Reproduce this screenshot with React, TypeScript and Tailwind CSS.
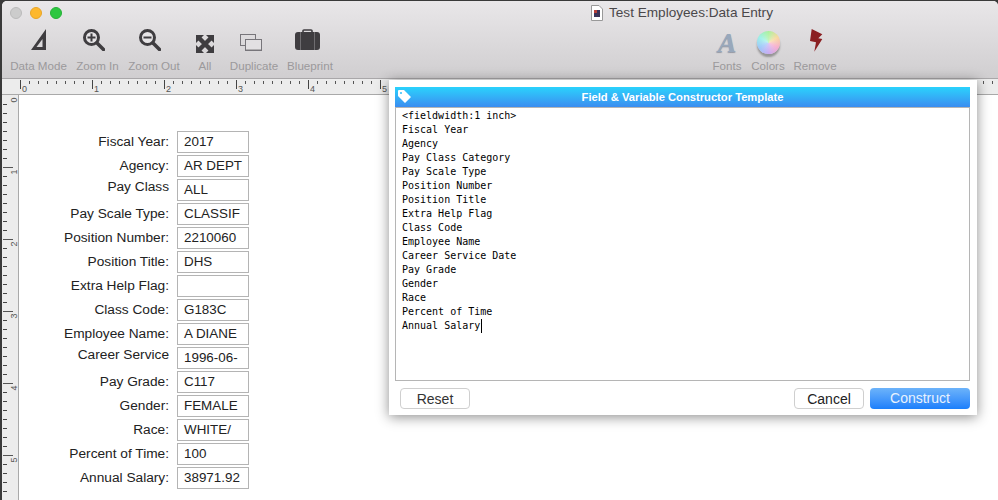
const fields = [
  { label: "Fiscal Year:", value: "2017" },
  { label: "Agency:", value: "AR DEPT" },
  { label: "Pay Class", value: "ALL", raised: true },
  { label: "Pay Scale Type:", value: "CLASSIF" },
  { label: "Position Number:", value: "2210060" },
  { label: "Position Title:", value: "DHS" },
  { label: "Extra Help Flag:", value: "" },
  { label: "Class Code:", value: "G183C" },
  { label: "Employee Name:", value: "A DIANE" },
  { label: "Career Service", value: "1996-06-", raised: true },
  { label: "Pay Grade:", value: "C117" },
  { label: "Gender:", value: "FEMALE" },
  { label: "Race:", value: "WHITE/" },
  { label: "Percent of Time:", value: "100" },
  { label: "Annual Salary:", value: "38971.92" },
];

const templateLines = [
  "<fieldwidth:1 inch>",
  "Fiscal Year",
  "Agency",
  "Pay Class Category",
  "Pay Scale Type",
  "Position Number",
  "Position Title",
  "Extra Help Flag",
  "Class Code",
  "Employee Name",
  "Career Service Date",
  "Pay Grade",
  "Gender",
  "Race",
  "Percent of Time",
];

const INK = "#3f3d40";

function ToolItem({ label, width, children }: { label: string; width: string; children: React.ReactNode }) {
  return (
    <div className={`flex flex-col items-center ${width}`}>
      <div className="flex h-[34px] w-full items-start justify-center">{children}</div>
      <span className="mt-[1px] whitespace-nowrap text-[11.6px] leading-[14px] text-[#9b999b]">{label}</span>
    </div>
  );
}

function DataModeIcon() {
  return (
    <svg className="mt-[5px]" width="15" height="21" viewBox="0 0 15 21">
      <path fillRule="evenodd" d="M15 0 L15 21 L0 21 Z M11.5 10 L11.5 18 L5.5 18 Z" fill={INK} />
    </svg>
  );
}

function ZoomIcon({ plus }: { plus?: boolean }) {
  return (
    <svg className="mr-[8px] mt-[5px]" width="22" height="22" viewBox="0 0 22 22">
      <circle cx="8.5" cy="8.5" r="7" fill="#e6e4e6" stroke={INK} strokeWidth="3" />
      <path d="M14 14 L20.5 20.5" stroke={INK} strokeWidth="3.5" strokeLinecap="round" />
      <path d="M4.5 8.5 H12.5" stroke={INK} strokeWidth="2" />
      {plus && <path d="M8.5 4.5 V12.5" stroke={INK} strokeWidth="2" />}
    </svg>
  );
}

function AllIcon() {
  return (
    <svg className="mt-[11px]" width="18" height="18" viewBox="0 0 18 18" fill={INK}>
      <path d="M0 0 H8 L0 8 Z" />
      <path d="M18 0 H10 L18 8 Z" />
      <path d="M0 18 H8 L0 10 Z" />
      <path d="M18 18 H10 L18 10 Z" />
      <path d="M3 3 L15 15 M15 3 L3 15" stroke={INK} strokeWidth="4.5" />
    </svg>
  );
}

function DuplicateIcon() {
  return (
    <svg className="mr-[6px] mt-[10px]" width="22" height="17" viewBox="0 0 22 17">
      <rect x="0.5" y="0.5" width="15" height="11" fill="none" stroke="#77757a" />
      <rect x="5.5" y="5.5" width="16" height="11" fill="#e2e0e2" stroke="#77757a" />
      <rect x="6" y="15" width="15" height="1" fill="#b0aeb0" />
    </svg>
  );
}

function BlueprintIcon() {
  return (
    <svg className="mr-[5px] mt-[5px]" width="25" height="21" viewBox="0 0 25 21">
      <path d="M8 4 V1.8 Q8 1 9 1 H16 Q17 1 17 1.8 V4" fill="none" stroke={INK} strokeWidth="1.6" />
      <rect x="0" y="3" width="25" height="18" rx="3" fill={INK} />
      <path d="M5.5 3 V21 M19.5 3 V21" stroke="#6f6d70" />
    </svg>
  );
}

function BoltIcon() {
  return (
    <svg className="ml-[2px] mt-[5px]" width="13" height="23" viewBox="0 0 13 23">
      <path d="M1.7 0 L12.3 5.3 L8.3 9.3 L12.3 10 L4.3 22.7 L6 13.3 L0 12 Z" fill="#8b1f22" />
    </svg>
  );
}

function HorizontalRuler() {
  const ticks = Array.from({ length: 112 }, (_, i) => i);
  return (
    <svg width="980" height="15" className="block">
      {ticks.map((i) => {
        const x = 2.5 + i * 9;
        if (i % 8 === 0) return <line key={i} x1={x} x2={x} y1="1" y2="10" stroke="#444" />;
        return <line key={i} x1={x} x2={x} y1="2" y2="5" stroke="#555" />;
      })}
      {[0, 1, 2, 3, 4, 5].map((n) => (
        <text key={n} x={4 + n * 72} y="13" fontSize="9" fill="#555">{n}</text>
      ))}
    </svg>
  );
}

function VerticalRuler() {
  const ticks = Array.from({ length: 46 }, (_, i) => i);
  return (
    <svg width="16" height="405" className="block">
      {ticks.map((i) => {
        const y = 0.5 + i * 9;
        if (i === 0) return null;
        if (i % 8 === 0) return <line key={i} x1="1" x2="11" y1={y} y2={y} stroke="#555" />;
        return <line key={i} x1="1" x2="5" y1={y} y2={y} stroke="#444" />;
      })}
      {[0, 1, 2, 3, 4, 5].map((n) => (
        <text key={n} x="0" y="0" fontSize="9" fill="#555" transform={`translate(15 ${n * 72 + 5}) rotate(-90)`} textAnchor="middle">{n}</text>
      ))}
    </svg>
  );
}

function Dialog() {
  return (
    <div className="absolute left-[389px] top-[80px] flex h-[335px] w-[588px] flex-col bg-white pl-[6px] pr-[7px] pt-[7px] shadow-[0_2px_12px_rgba(0,0,0,0.45)]">
      <div className="relative flex h-[20px] items-center justify-center bg-gradient-to-b from-[#2ad2fc] to-[#3a8df0] text-[11.2px] font-bold text-white">
        <svg className="absolute left-[3px] top-[3px]" width="13" height="13" viewBox="0 0 13 13">
          <path fillRule="evenodd" d="M0 1 Q0 0 1 0 H6 L13 7 L7 13 L0 6 Z M3 2 A1 1 0 1 0 3 4 A1 1 0 1 0 3 2 Z" fill="#fff" />
        </svg>
        Field &amp; Variable Constructor Template
      </div>
      <div className="h-[274px] border border-[#b5b5b5] px-[6px] pt-[1px] font-['DejaVu_Sans_Mono',monospace] text-[10px] leading-[14px] text-black">
        {templateLines.map((line) => (
          <div key={line}>{line}</div>
        ))}
        <div className="flex items-stretch">
          Annual Salary<span className="ml-px w-px bg-black" />
        </div>
      </div>
      <div className="mt-[7px] flex items-center justify-between pl-[5px] text-[14px]">
        <button className="h-[21px] w-[70px] rounded-[4px] border border-[#cfcfcf] bg-white text-[#333]">Reset</button>
        <div className="flex gap-[6px]">
          <button className="h-[21px] w-[70px] rounded-[4px] border border-[#cfcfcf] bg-white text-[#222]">Cancel</button>
          <button className="h-[21px] w-[100px] rounded-[4px] bg-gradient-to-b from-[#6cb3fa] to-[#1a7ffb] text-[#e8f2fe]">Construct</button>
        </div>
      </div>
    </div>
  );
}

export default function App() {
  return (
    <div className="relative h-[500px] w-[998px] overflow-hidden bg-[#3a3a3a] pl-[2px] pt-[1px] font-['Liberation_Sans',Arial,sans-serif]">
      <div className="h-[499px] overflow-hidden rounded-t-[5px] bg-white">
        <div className="h-[78px] border-b border-[#a9a7a9] bg-gradient-to-b from-[#e9e7e9] to-[#d0ced0]">
          <div className="flex h-[23px] items-center pl-[8px]">
            <div className="flex gap-[8px]">
              <span className="h-[12px] w-[12px] rounded-full border border-[#bbb] bg-[#cccccc]" />
              <span className="h-[12px] w-[12px] rounded-full border border-[#e8a526] bg-[#fdb82e]" />
              <span className="h-[12px] w-[12px] rounded-full border border-[#25b136] bg-[#2cc740]" />
            </div>
            <svg className="ml-[529px]" width="12" height="16" viewBox="0 0 12 16">
              <path d="M0.5 0.5 H8 L11.5 4 V15.5 H0.5 Z" fill="#fff" stroke="#999" />
              <rect x="3" y="5" width="6" height="7" fill="#3b3358" />
              <rect x="3" y="5" width="3" height="3" fill="#b8403a" />
            </svg>
            <span className="ml-[6px] pt-px text-[13.6px] text-[#4a484a]">Test Employees:Data Entry</span>
          </div>
          <div className="flex justify-between pr-[157px]">
            <div className="flex">
              <ToolItem label="Data Mode" width="w-[73px]"><DataModeIcon /></ToolItem>
              <ToolItem label="Zoom In" width="w-[45px]"><ZoomIcon plus /></ToolItem>
              <ToolItem label="Zoom Out" width="w-[68px]"><ZoomIcon /></ToolItem>
              <ToolItem label="All" width="w-[34px]"><AllIcon /></ToolItem>
              <ToolItem label="Duplicate" width="w-[64px]"><DuplicateIcon /></ToolItem>
              <ToolItem label="Blueprint" width="w-[48px]"><BlueprintIcon /></ToolItem>
            </div>
            <div className="flex">
              <ToolItem label="Fonts" width="w-[40px]">
                <span className="mt-[6px] font-['Liberation_Serif',serif] text-[28px] font-bold italic leading-[26px] text-[#98a8bc] [text-shadow:0_1px_1px_rgba(80,90,110,0.5)]">A</span>
              </ToolItem>
              <ToolItem label="Colors" width="w-[42px]">
                <span className="mt-[7px] h-[23px] w-[23px] rounded-full bg-[radial-gradient(circle,rgba(255,255,255,0.4),transparent_75%),conic-gradient(#a8f09a,#f7d79a,#f5a8cc,#c4a8f2,#98c4fa,#98f0e6,#a8f09a)] shadow-[0_3px_2px_rgba(0,0,0,0.3)]" />
              </ToolItem>
              <ToolItem label="Remove" width="w-[52px]"><BoltIcon /></ToolItem>
            </div>
          </div>
        </div>
        <div className="h-[16px] border-b border-[#a9a9a9] bg-[#ececec] pl-[16px]">
          <HorizontalRuler />
        </div>
        <div className="flex">
          <div className="w-[17px] shrink-0 border-r border-[#a9a9a9] bg-[#ececec]">
            <VerticalRuler />
          </div>
          <div className="flex flex-col gap-[2px] pt-[36px]">
            {fields.map((f) => (
              <div key={f.label} className="flex h-[22px] items-center">
                <span className={`w-[150px] whitespace-nowrap pt-px text-right text-[13.7px] text-[#222] ${f.raised ? "-translate-y-[3px]" : ""}`}>
                  {f.label}
                </span>
                <span className="ml-[8px] flex h-[22px] w-[72px] items-center whitespace-nowrap border border-[#b4b4b4] pl-[6px] pt-px text-[13.4px] text-[#222]">
                  {f.value}
                </span>
              </div>
            ))}
          </div>
        </div>
      </div>
      <Dialog />
    </div>
  );
}
